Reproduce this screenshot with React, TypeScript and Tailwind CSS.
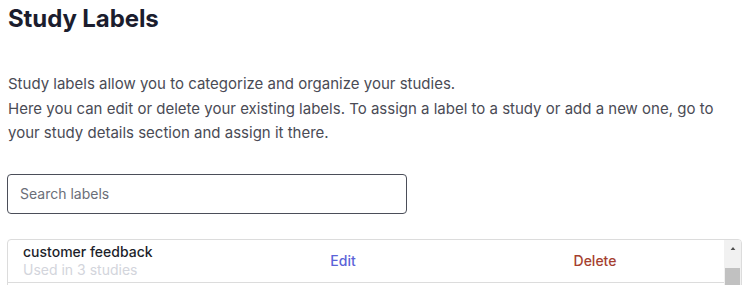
import React from "react";

export default function App() {
  return (
    <div className="w-[743px] h-[285px] overflow-hidden bg-white px-2 pt-[3px] font-['Inter',sans-serif]">
      <h1 className="text-[24px] leading-[32px] font-bold text-[#1b1d2e] tracking-[-0.1px]">Study Labels</h1>
      <div className="mt-[37px] text-[15px] leading-[24.5px] text-[#4a4b55]">
        <p>Study labels allow you to categorize and organize your studies.</p>
        <p>
          Here you can edit or delete your existing labels. To assign a label to a study or add a new one, go to
          your study details section and assign it there.
        </p>
      </div>
      <div className="mt-[28px] w-[400px] -ml-px h-[40px] rounded-[4px] border border-[#4b4e59] flex items-center px-3 text-[14px] text-[#6b6e78]">
        Search labels
      </div>
      <div className="mt-[25px] -ml-px w-[735px] h-[60px] rounded-t-[4px] border border-[#dcdcdc] flex overflow-hidden">
        <div className="flex-1">
          <div className="grid grid-cols-[212px_246px_1fr] h-[43px] border-b border-[#dcdcdc] items-center">
            <div className="pl-[15px] pt-[1px]">
              <div className="text-[14px] leading-[18px] font-medium text-[#1d1f2b]">customer feedback</div>
              <div className="text-[14px] leading-[18px] text-[#d3d5dc]">Used in 3 studies</div>
            </div>
            <div className="text-center text-[14px] font-medium text-[#5b63d8]">Edit</div>
            <div className="text-center text-[14px] font-medium text-[#a53f30]">Delete</div>
          </div>
        </div>
        <div className="w-[17px] bg-[#f1f1f1] flex flex-col items-center">
          <svg width="8" height="5" viewBox="0 0 8 5" className="mt-[7px]">
            <polygon points="4,0 8,5 0,5" fill="#505050" />
          </svg>
          <div className="mt-[18px] w-[15px] h-[40px] bg-[#c1c1c1]" />
        </div>
      </div>
    </div>
  );
}
